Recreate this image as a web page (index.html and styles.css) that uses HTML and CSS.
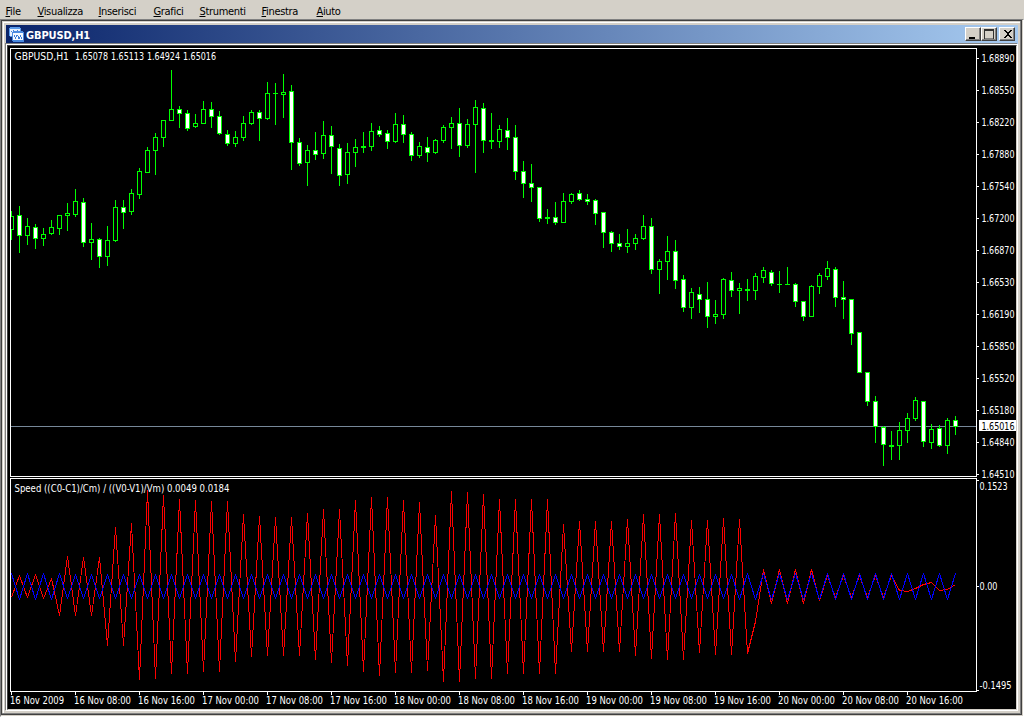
FILE: index.html
```html
<!DOCTYPE html>
<html lang="it">
<head>
<meta charset="utf-8">
<title>GBPUSD,H1</title>
<link rel="stylesheet" href="styles.css">
</head>
<body>
<nav class="menu">
  <span><u>F</u>ile</span><span><u>V</u>isualizza</span><span><u>I</u>nserisci</span><span><u>G</u>rafici</span><span><u>S</u>trumenti</span><span><u>F</u>inestra</span><span><u>A</u>iuto</span>
</nav>
<main class="workspace">
  <section class="window">
    <header class="titlebar">
      <svg class="app-icon" width="15" height="15" viewBox="0 0 15 15" shape-rendering="crispEdges">
        <path fill="#5b9bea" d="M1 0h10v1h1v9H1V9H0V1h1z"/><path fill="#e8f2ff" d="M1 2h10v7H1z"/>
        <path fill="#3f7fd8" d="M2 4h1v1H2zM3 5h1v1H3zM4 3h1v2H4zM6 4h1v1H6zM8 3h1v1H8z"/>
        <path fill="#4a8ae0" d="M4 4h10v1h1v10H4v-1H3V5h1z"/><path fill="#f4f9ff" d="M4 6h10v7H4z"/>
        <path fill="#3f7fd8" d="M5 8h1v2H5zM6 10h1v2H6zM7 8h1v2H7zM8 8h1v1H8zM9 9h1v3H9zM10 10h1v2h-1zM11 8h1v2h-1zM12 10h1v2h-1z"/>
      </svg>
      <h1 class="title">GBPUSD,H1</h1>
      <div class="controls">
        <button class="control" aria-label="Riduci"><svg width="14" height="12" shape-rendering="crispEdges"><path d="M3 9h6v2H3z"/></svg></button>
        <button class="control" aria-label="Ingrandisci"><svg width="14" height="12" shape-rendering="crispEdges"><path fill-rule="evenodd" fill="#303030" d="M2 1h10v10H2zM3 3v7h8V3z"/><path fill="#808080" d="M3 10h8v1H3z"/></svg></button>
        <button class="control close" aria-label="Chiudi"><svg width="14" height="12" shape-rendering="crispEdges"><path d="M4 2h2v1h1v1h2V3h1V2h2v1h-1v1h-1v1H9v2h1v1h1v1h1v1h-2V9H9V8H7v1H6v1H4V9h1V8h1V7h1V5H6V4H5V3H4z"/></svg></button>
      </div>
    </header>
    <svg class="chart" id="chart" width="1008" height="663" viewBox="8 46 1008 663">
      <g class="frame">
        <path d="M10 48h967v1h-967zM10 48h1v429h-1zM10 476h967v1h-967zM976 48h1v429h-1z"/>
        <path d="M10 478h967v1h-967zM10 478h1v214h-1zM10 691h967v1h-967zM976 478h1v214h-1z"/>
      </g>
      <path class="bid" d="M11 426h965v1H11z"/>
      <g id="candles"></g>
      <g id="speed"></g>
      <g id="labels"></g>
    </svg>
  </section>
</main>
<script src="chart.js"></script>
</body>
</html>
```
FILE: styles.css
```css
* { box-sizing: border-box; }
body {
  margin: 0;
  width: 1024px;
  height: 717px;
  overflow: hidden;
  display: flex;
  flex-direction: column;
  background: #d4d0c8;
  font-family: Tahoma, "DejaVu Sans Condensed", "DejaVu Sans", sans-serif;
}
.menu {
  flex: none;
  height: 19px;
  display: grid;
  grid-template-columns: 32px 61px 55px 46px 62px 55px 60px;
  padding-left: 5.5px;
  font-size: 11px;
  line-height: 23px;
  letter-spacing: -0.33px;
  color: #000;
  white-space: nowrap;
}
.menu u { text-underline-offset: 1px; text-decoration-thickness: 1px; }
.workspace {
  flex: 1;
  border: 1px solid;
  border-color: #808080 #fff #fff #808080;
}
.window {
  display: flex;
  flex-direction: column;
  width: 1021px;
  height: 695px;
  padding: 4px;
  border: 1px solid #404040;
  background:
    linear-gradient(#fff, #fff) 1px 1px / 1017px 1px no-repeat,
    linear-gradient(#fff, #fff) 1px 1px / 1px 691px no-repeat,
    linear-gradient(#808080, #808080) 0 692px / 1019px 1px no-repeat,
    linear-gradient(#808080, #808080) 1018px 0 / 1px 693px no-repeat,
    #d4d0c8;
}
.titlebar {
  flex: none;
  width: 1012px;
  height: 19px;
  display: flex;
  align-items: flex-start;
  padding: 2px 3px 0;
  background: linear-gradient(90deg, #0a246a, #a6caf0);
}
.app-icon { flex: none; margin-right: 2px; }
.title {
  margin: 0;
  font-size: 11px;
  line-height: 17px;
  font-weight: bold;
  letter-spacing: -0.13px;
  color: #fff;
}
.controls { margin-left: auto; display: flex; }
.control {
  width: 16px;
  height: 14px;
  padding: 0;
  border: 1px solid;
  border-color: #fff #404040 #404040 #fff;
  background: #d4d0c8;
  box-shadow: inset -1px -1px #808080;
}
.control svg { display: block; }
.close { margin-left: 2px; }
.chart {
  flex: none;
  display: block;
  box-sizing: content-box;
  margin: 1px;
  background: #000;
  border: 1px solid;
  border-color: #404040 #d4d0c8 #d4d0c8 #404040;
  outline: 1px solid #fff;
  box-shadow: -1px -1px 0 1px #808080;
  overflow: visible;
}
.frame, .tick { fill: #fff; }
.bid { fill: #778899; }
.line { fill: #0f0; }
.hollow { fill: #000; }
.filled { fill: #fff; }
.red, .blue { fill: none; stroke-width: 1; stroke-linejoin: bevel; shape-rendering: crispEdges; }
.red { stroke: #f00; }
.blue { stroke: #00f; }
.label { font-size: 10px; fill: #fff; }
.label.current { fill: #000; }
```
FILE: chart.js
```javascript
const NS = 'http://www.w3.org/2000/svg';
const add = (parent, tag, attrs, text) => {
  const el = document.createElementNS(NS, tag);
  for (const key in attrs) el.setAttribute(key, attrs[key]);
  if (text) el.textContent = text;
  document.getElementById(parent).appendChild(el);
};
const rect = (parent, cls, x, y, width, height) => add(parent, 'rect', { class: cls, x, y, width, height });
const barX = i => 11 + 8 * i;

// One bar per entry: high, body top, body bottom, low, and f when the bar closed lower.
const bars = `211 216 229 239;206 215 235 252 f;218 226 235 244;224 227 238 248 f;228 234 238 245;220 227 233 234;215 215 228 234;203 213 215 230;189 201 214 216;198 202 242 246 f;223 239 242 259;238 239 256 267 f;226 240 256 265;200 207 240 241;200 207 212 228 f;189 193 211 214;168 171 194 198;147 150 172 172;133 137 150 174;120 120 137 146;70 109 120 120;106 109 113 127 f;110 113 128 130 f;114 123 126 127;101 109 123 123;102 109 116 127 f;111 116 133 134 f;130 134 143 145 f;131 137 143 146;116 123 137 140;110 112 123 124;110 112 118 140 f;82 93 118 119;83 93 93 124;74 92 94 117;85 91 142 169 f;138 142 163 165 f;145 150 162 185;132 150 154 159 f;121 135 153 158;126 135 146 173 f;144 148 175 185 f;143 152 174 183;139 147 152 166;132 146 147 152;123 131 146 150;126 130 134 136 f;130 133 141 148 f;113 124 141 142;115 124 134 142 f;132 134 155 160 f;142 146 155 157;137 147 152 161 f;139 140 152 153;125 127 140 142;117 123 127 148;108 123 145 156 f;119 124 145 147;100 107 124 172;103 108 140 152 f;113 140 141 148;125 129 141 147;118 130 137 149 f;125 137 171 179 f;161 171 183 197 f;164 183 187 201 f;187 187 218 221 f;209 217 218 223;202 217 222 224 f;193 201 222 222;193 194 201 203;190 193 199 200 f;194 199 201 204 f;199 200 213 224 f;212 212 232 247 f;231 232 243 251 f;234 243 246 249 f;229 243 246 252;234 238 243 249;215 226 238 239;218 226 269 273 f;259 261 269 293;236 251 261 279;240 251 280 288 f;275 279 307 311 f;288 292 307 318;287 294 299 312 f;282 299 316 327 f;300 314 316 323;278 279 314 318;272 280 290 296 f;283 288 290 313;279 289 290 300;273 276 290 299;267 270 277 282;270 272 283 285 f;271 284 284 292;267 284 284 284;283 284 301 306 f;301 301 316 320 f;285 286 316 316;273 275 286 293;261 268 276 279;267 269 297 306 f;281 297 299 318 f;299 299 333 344 f;332 332 372 372 f;372 372 401 405 f;396 401 426 442 f;426 427 444 465 f;431 445 446 459;422 430 445 459;413 418 430 442;397 400 418 420;401 401 441 446 f;424 429 442 448;425 428 445 446 f;418 420 445 453;416 420 426 434 f`;
bars.split(';').forEach((bar, i) => {
  const [high, top, bottom, low, down] = bar.split(' ');
  const x = barX(i), t = +top, b = +bottom, left = Math.max(11, x - 2);
  rect('candles', 'line', x, +high, 1, low - high + 1);
  rect('candles', 'line', left, t, x + 3 - left, b - t + 1);
  if (b - t > 1) {
    const inner = Math.max(11, x - 1);
    rect('candles', down ? 'filled' : 'hollow', inner, t + 1, x + 2 - inner, b - t - 1);
  }
});

const red = '597 575 597 574 598 578 615 556 615 557 615 557 645 527 645 523 679 490 678 495 673 499 673 500 671 501 671 501 661 514 656 516 655 517 655 517 655 513 659 509 662 509 665 500 671 497 675 497 672 500 672 502 670 515 681 491 681 492 678 494 678 499 673 499 673 499 673 499 673 524 651 521 651 521 651 521 651 519 655 514 658 514 659 513 659 520 652 520 654 518 654 519 653 621 569 603 569 603 569 603 569 600 575 597 575 597 575 597 575 597 575 590 591 588 584 582 590 589 584'.split(' ').map(Number);
const blue = red.map((_, i) => {
  const wide = i < 7 || i > 90;
  return i % 2 ? (wide ? 599 : 598) : (wide ? 573 : 574);
});
const line = (cls, ys) => add('speed', 'polyline', {
  class: cls,
  points: ys.map((y, i) => `${barX(i) + 0.5},${y + 0.5}`).join(' ')
});
line('red', red);
line('blue', blue);

const label = (text, x, y, length, cls = '') =>
  add('labels', 'text', { class: 'label ' + cls, x, y, textLength: length, lengthAdjust: 'spacingAndGlyphs' }, text);

'1.68890 1.68550 1.68220 1.67880 1.67540 1.67200 1.66870 1.66530 1.66190 1.65850 1.65520 1.65180 1.64840 1.64510'
  .split(' ').forEach((price, i) => {
    const y = 58 + 32 * i;
    rect('labels', 'tick', 977, y, 2, 1);
    label(price, 981.5, y + 3.5, 33);
  });
rect('labels', 'tick', 979, 420, 37, 11);
label('1.65016', 981.5, 429.5, 33, 'current');

[['0.1523', 480, 489.5, 28], ['0.00', 586, 589.5, 18], ['-0.1495', 690, 688.5, 32]].forEach(([text, tick, y, length]) => {
  rect('labels', 'tick', 977, tick, 2, 1);
  label(text, 979.5, y, length);
});

['16 Nov 2009', '16 Nov 08:00', '16 Nov 16:00', '17 Nov 00:00', '17 Nov 08:00', '17 Nov 16:00', '18 Nov 00:00', '18 Nov 08:00',
  '18 Nov 16:00', '19 Nov 00:00', '19 Nov 08:00', '19 Nov 16:00', '20 Nov 00:00', '20 Nov 08:00', '20 Nov 16:00'].forEach((time, i) => {
  rect('labels', 'tick', 11 + 64 * i, 692, 1, 3);
  label(time, 10 + 64 * i, 704, i ? 57 : 54);
});

label('GBPUSD,H1', 14.5, 60, 54.5);
label('1.65078', 75, 60, 33);
label('1.65113', 111, 60, 33);
label('1.64924', 147, 60, 33);
label('1.65016', 183, 60, 33);
label('Speed ((C0-C1)/Cm) / ((V0-V1)/Vm) 0.0049 0.0184', 14.5, 492, 215);
```
